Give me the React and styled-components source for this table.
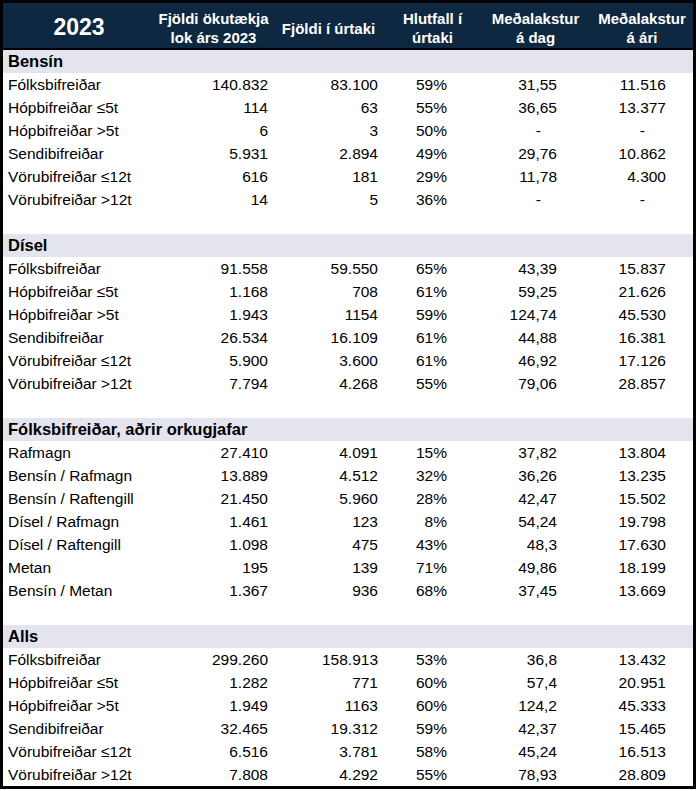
import React from 'react';
import styled, { createGlobalStyle } from 'styled-components';

const GlobalStyle = createGlobalStyle`
  html, body {
    margin: 0;
    padding: 0;
    background: #ffffff;
  }
  body {
    font-family: "Liberation Sans", Arial, sans-serif;
  }
`;

// right padding of each data column, taken from where the numbers end
const PADS = [0, 4, 7, 33, 34, 27];
const DASH_PADS = [0, 4, 7, 33, 50, 48];

const sections = [
  {
    title: 'Bensín',
    rows: [
      ['Fólksbifreiðar', '140.832', '83.100', '59%', '31,55', '11.516'],
      ['Hópbifreiðar ≤5t', '114', '63', '55%', '36,65', '13.377'],
      ['Hópbifreiðar >5t', '6', '3', '50%', '-', '-'],
      ['Sendibifreiðar', '5.931', '2.894', '49%', '29,76', '10.862'],
      ['Vörubifreiðar ≤12t', '616', '181', '29%', '11,78', '4.300'],
      ['Vörubifreiðar >12t', '14', '5', '36%', '-', '-'],
    ],
  },
  {
    title: 'Dísel',
    rows: [
      ['Fólksbifreiðar', '91.558', '59.550', '65%', '43,39', '15.837'],
      ['Hópbifreiðar ≤5t', '1.168', '708', '61%', '59,25', '21.626'],
      ['Hópbifreiðar >5t', '1.943', '1154', '59%', '124,74', '45.530'],
      ['Sendibifreiðar', '26.534', '16.109', '61%', '44,88', '16.381'],
      ['Vörubifreiðar ≤12t', '5.900', '3.600', '61%', '46,92', '17.126'],
      ['Vörubifreiðar >12t', '7.794', '4.268', '55%', '79,06', '28.857'],
    ],
  },
  {
    title: 'Fólksbifreiðar, aðrir orkugjafar',
    rows: [
      ['Rafmagn', '27.410', '4.091', '15%', '37,82', '13.804'],
      ['Bensín / Rafmagn', '13.889', '4.512', '32%', '36,26', '13.235'],
      ['Bensín / Raftengill', '21.450', '5.960', '28%', '42,47', '15.502'],
      ['Dísel / Rafmagn', '1.461', '123', '8%', '54,24', '19.798'],
      ['Dísel / Raftengill', '1.098', '475', '43%', '48,3', '17.630'],
      ['Metan', '195', '139', '71%', '49,86', '18.199'],
      ['Bensín / Metan', '1.367', '936', '68%', '37,45', '13.669'],
    ],
  },
  {
    title: 'Alls',
    rows: [
      ['Fólksbifreiðar', '299.260', '158.913', '53%', '36,8', '13.432'],
      ['Hópbifreiðar ≤5t', '1.282', '771', '60%', '57,4', '20.951'],
      ['Hópbifreiðar >5t', '1.949', '1163', '60%', '124,2', '45.333'],
      ['Sendibifreiðar', '32.465', '19.312', '59%', '42,37', '15.465'],
      ['Vörubifreiðar ≤12t', '6.516', '3.781', '58%', '45,24', '16.513'],
      ['Vörubifreiðar >12t', '7.808', '4.292', '55%', '78,93', '28.809'],
    ],
  },
];

const headers = [
  ['Fjöldi ökutækja', 'lok árs 2023'],
  ['Fjöldi í úrtaki'],
  ['Hlutfall í', 'úrtaki'],
  ['Meðalakstur', 'á dag'],
  ['Meðalakstur', 'á ári'],
];

const App = () => {
  return (
    <>
      <GlobalStyle />
      <Sheet>
        <Head>
          <Year>2023</Year>
          {headers.map((lines, i) => (
            <HeadCell key={i}>
              {lines.map((l) => (
                <span key={l}>{l}</span>
              ))}
            </HeadCell>
          ))}
        </Head>
        {sections.map((s, si) => (
          <React.Fragment key={s.title}>
            {si > 0 && <Blank />}
            <Section>{s.title}</Section>
            {s.rows.map((r) => (
              <Row key={s.title + r[0]}>
                <Label>{r[0]}</Label>
                {r.slice(1).map((v, i) => (
                  <Num key={i} $pad={v === '-' ? DASH_PADS[i + 1] : PADS[i + 1]}>
                    {v}
                  </Num>
                ))}
              </Row>
            ))}
          </React.Fragment>
        ))}
      </Sheet>
    </>
  );
};

const COLS = '152px 117px 113px 95px 111px 102px';

const Sheet = styled.div`
  box-sizing: border-box;
  width: 696px;
  border: 3px solid #000;
  background: #fff;
  color: #000;
`;

const Head = styled.div`
  display: grid;
  grid-template-columns: ${COLS};
  height: 45px;
  background: #0e2841;
  border-bottom: 2px solid #000;
  color: #fff;
`;

const Year = styled.div`
  display: flex;
  align-items: center;
  justify-content: center;
  font-size: 23px;
  font-weight: 700;
  padding-top: 3px;
`;

const HeadCell = styled.div`
  display: flex;
  flex-direction: column;
  align-items: center;
  justify-content: center;
  padding-top: 5px;
  font-size: 15px;
  font-weight: 700;
  line-height: 19px;
  text-align: center;
  white-space: nowrap;
`;

const Row = styled.div`
  display: grid;
  grid-template-columns: ${COLS};
  height: 23px;
  align-items: center;
  font-size: 15.5px;
`;

const Section = styled.div`
  height: 23px;
  display: flex;
  align-items: center;
  padding-left: 5px;
  background: #e4e4ee;
  font-size: 16.5px;
  font-weight: 700;
`;

const Blank = styled.div`
  height: 23px;
`;

const Label = styled.div`
  padding-left: 5px;
  white-space: nowrap;
`;

const Num = styled.div`
  text-align: right;
  padding-right: ${(p) => p.$pad}px;
  white-space: nowrap;
`;

export default App;
